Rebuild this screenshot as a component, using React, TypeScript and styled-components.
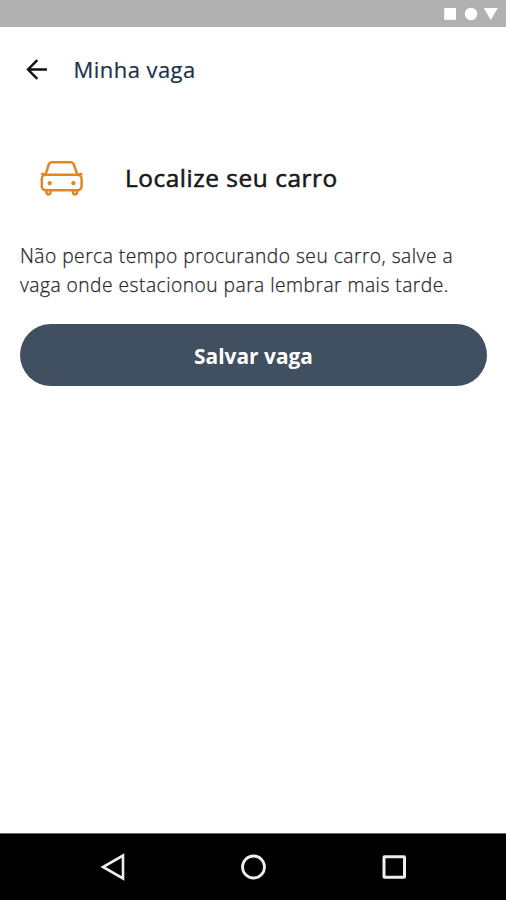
import React from 'react';
import styled, { createGlobalStyle } from 'styled-components';

const GlobalStyle = createGlobalStyle`
  * { box-sizing: border-box; }
  body { margin: 0; background: #fff; font-family: 'Open Sans', 'Noto Sans', sans-serif; }
`;

const Screen = styled.div`
  display: flex;
  flex-direction: column;
  width: 506px;
  height: 900px;
  background: #fff;
  overflow: hidden;
`;

const StatusBar = styled.header`
  display: flex;
  justify-content: flex-end;
  flex: 0 0 27px;
  background: #b1b1b1;
`;

const TopBar = styled.div`
  display: flex;
  align-items: center;
  flex: 0 0 84px;
  padding-left: 26px;
`;

const BackButton = styled.button`
  display: flex;
  padding: 0;
  border: 0;
  background: none;
`;

const ScreenTitle = styled.h1`
  margin: 0 0 0 25.5px;
  font-size: 22px;
  font-weight: 400;
  line-height: 30px;
  letter-spacing: 0.45px;
  color: #1c3148;
  -webkit-text-stroke: 0.2px #1c3148;
  white-space: nowrap;
`;

const Content = styled.main`
  display: flex;
  flex-direction: column;
  flex: 1;
  padding: 45px 19px 0 20px;
`;

const Heading = styled.div`
  display: flex;
  align-items: center;
  height: 44px;
  padding-left: 20px;
`;

const HeadingText = styled.h2`
  margin: 0 0 0 41px;
  font-size: 24.4px;
  font-weight: 400;
  line-height: 34px;
  letter-spacing: 0.55px;
  color: #181818;
  -webkit-text-stroke: 0.55px #181818;
  white-space: nowrap;
`;

const Description = styled.p`
  margin: 41px 0 0;
  font-size: 19.2px;
  font-weight: 300;
  line-height: 29px;
  letter-spacing: 0.49px;
  color: #262626;
  -webkit-text-stroke: 0.25px #262626;
  white-space: nowrap;
`;

const SaveButton = styled.button`
  height: 62px;
  margin-top: 25px;
  padding: 2px 0 0;
  border: 0;
  border-radius: 31px;
  background: #405061;
  color: #fff;
  font: 700 20.9px/30px 'Open Sans', 'Noto Sans', sans-serif;
`;

const NavigationBar = styled.nav`
  display: flex;
  justify-content: center;
  align-items: center;
  gap: 112px;
  flex: 0 0 67px;
  padding-top: 1px;
  border-top: 1px solid #666;
  background: #000;
`;

const CarIcon = () => (
  <svg width="44" height="38" viewBox="0 0 44 38" fill="none" stroke="#e28720" strokeWidth="2.5" strokeLinejoin="round">
    <path d="M5.5 15.8 L8.9 5 Q9.6 3.2 11.6 3.2 H30.9 Q32.9 3.2 33.6 5 L37.5 15.8" />
    <path d="M1.2 14.6 L5.2 15.8 M42.3 14.6 L38 15.8" />
    <rect x="1.8" y="15.8" width="39.8" height="15.4" rx="4" />
    <path d="M6.5 31.5 V33.3 Q6.5 35.4 8.5 35.4 Q10.5 35.4 10.5 33.3 V31.5 M33 31.5 V33.3 Q33 35.4 35 35.4 Q37 35.4 37 33.3 V31.5" />
    <circle cx="9.7" cy="24.1" r="2.2" fill="#e28720" stroke="none" />
    <circle cx="33.4" cy="24.1" r="2.2" fill="#e28720" stroke="none" />
  </svg>
);

export default function App() {
  return (
    <>
      <GlobalStyle />
      <Screen>
        <StatusBar>
          <svg width="66" height="27" viewBox="0 0 66 27" fill="#fff">
            <rect x="4.2" y="8" width="11.8" height="11.8" />
            <circle cx="31" cy="14" r="6.2" />
            <path d="M43.7 8 H57.8 L50.7 20 Z" />
          </svg>
        </StatusBar>
        <TopBar>
          <BackButton aria-label="Voltar">
            <svg width="22" height="22" viewBox="0 0 22 22" fill="none" stroke="#111" strokeWidth="2.4">
              <path d="M21 11.5 H2.3 M11.3 2.1 L2 11.5 L11.3 20.9" />
            </svg>
          </BackButton>
          <ScreenTitle>Minha vaga</ScreenTitle>
        </TopBar>
        <Content>
          <Heading>
            <CarIcon />
            <HeadingText>Localize seu carro</HeadingText>
          </Heading>
          <Description>
            Não perca tempo procurando seu carro, salve a<br />
            vaga onde estacionou para lembrar mais tarde.
          </Description>
          <SaveButton>Salvar vaga</SaveButton>
        </Content>
        <NavigationBar>
          <svg width="28" height="30" viewBox="0 0 28 30" fill="none" stroke="#eee" strokeWidth="2.6">
            <path d="M24 2.6 V25.4 L4 14 Z" />
          </svg>
          <svg width="28" height="30" viewBox="0 0 28 30" fill="none" stroke="#eee" strokeWidth="2.8">
            <circle cx="14.5" cy="14" r="11" />
          </svg>
          <svg width="28" height="30" viewBox="0 0 28 30" fill="none" stroke="#eee" strokeWidth="3">
            <rect x="5" y="3.7" width="20.5" height="20.5" rx="0.5" />
          </svg>
        </NavigationBar>
      </Screen>
    </>
  );
}
